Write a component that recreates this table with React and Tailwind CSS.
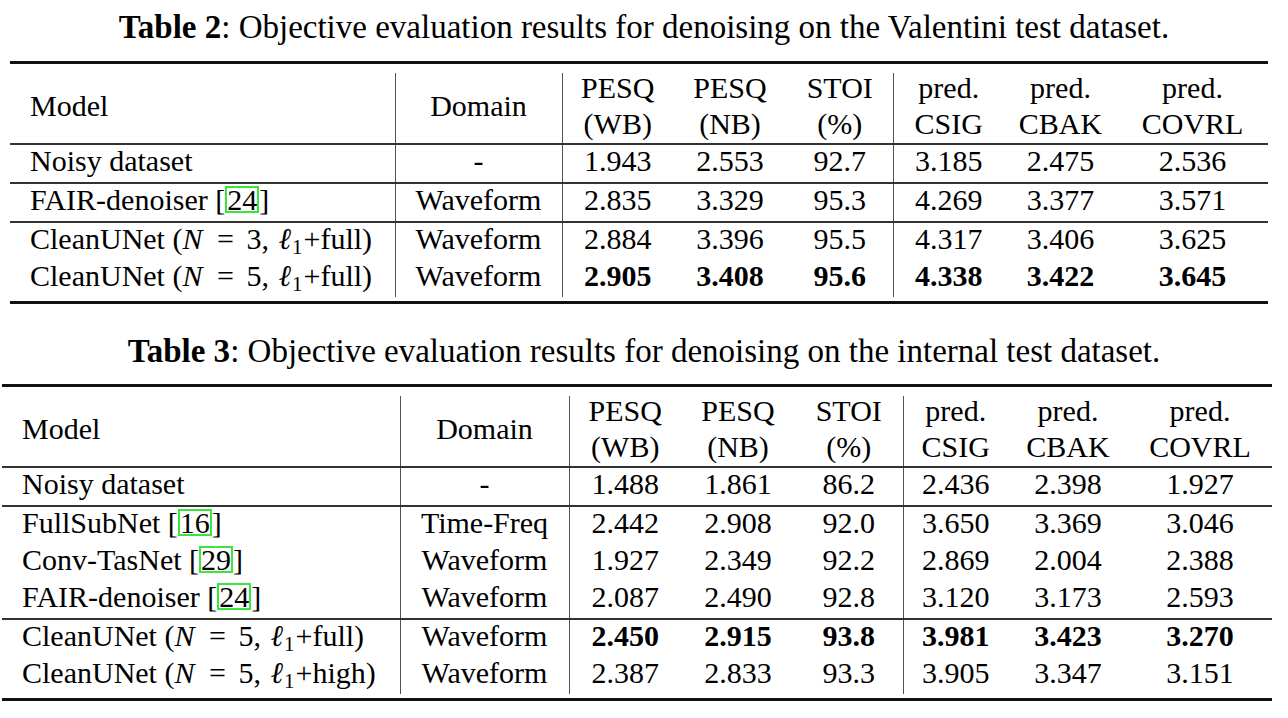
import React from "react";

const Cite = ({ n }) => (
  <>
    [<span className="inline-block border-2 border-[#3be63b] leading-[23px] px-0">{n}</span>]
  </>
);

const Clean = ({ n, loss }) => (
  <>
    CleanUNet (<i className="pr-[2px]">N</i>
    <span className="inline-block w-[42px] text-center">=</span>
    {n}, <i className="pl-[2px] pr-[1px]">ℓ</i>
    <sub className="text-[21px] pr-[1px]">1</sub>+{loss})
  </>
);

const VL = "border-l border-l-[#555]";

function H({ children }) {
  return <div className="-mt-[4px] leading-[36px]">{children}</div>;
}

function Header() {
  return (
    <tr className="border-b-2 border-b-[#333]">
      <td className="h-[71px] p-0 pl-[20px] text-left align-middle"><H>Model</H></td>
      <td className={`${VL} p-0 text-center align-middle`}><H>Domain</H></td>
      <td className={`${VL} p-0 text-center align-middle`}><H>PESQ<br />(WB)</H></td>
      <td className="p-0 text-center align-middle"><H>PESQ<br />(NB)</H></td>
      <td className="p-0 text-center align-middle"><H>STOI<br />(%)</H></td>
      <td className={`${VL} p-0 text-center align-middle`}><H>pred.<br />CSIG</H></td>
      <td className="p-0 text-center align-middle"><H>pred.<br />CBAK</H></td>
      <td className="p-0 text-center align-middle"><H>pred.<br />COVRL</H></td>
    </tr>
  );
}

function Row({ model, domain, vals, bold, line }) {
  return (
    <tr className={line ? "border-b-2 border-b-[#333]" : ""}>
      <td className="h-[37px] p-0 pb-[5px] pl-[20px] leading-[32px] text-left whitespace-nowrap">{model}</td>
      <td className={`${VL} p-0 pb-[5px] leading-[32px] text-center`}>{domain}</td>
      {vals.map((v, i) => (
        <td
          key={i}
          className={`${i === 0 || i === 3 ? VL : ""} p-0 pb-[5px] leading-[32px] text-center ${bold ? "font-bold" : ""}`}
        >
          {v}
        </td>
      ))}
    </tr>
  );
}

function Spacer({ h }) {
  return (
    <tr>
      <td colSpan={8} className={`${h} p-0 leading-none`}></td>
    </tr>
  );
}

export default function App() {
  return (
    <div className="w-[1288px] h-[718px] bg-white text-black overflow-hidden font-['Liberation_Serif',serif] text-[30px] leading-[36px]">
      <div className="pt-[9px] text-center text-[33px] leading-[36px]">
        <span className="font-bold">Table 2</span>: Objective evaluation results for denoising on the Valentini test dataset.
      </div>
      <div className="mt-[16px] ml-[10px] w-[1258px]">
        <div className="h-[3px] bg-[#111]"></div>
        <table className="table-fixed border-collapse w-[1258px]">
          <colgroup>
            <col className="w-[385px]" />
            <col className="w-[167px]" />
            <col className="w-[111px]" />
            <col className="w-[114px]" />
            <col className="w-[106px]" />
            <col className="w-[111px]" />
            <col className="w-[113px]" />
            <col className="w-[151px]" />
          </colgroup>
          <tbody>
            <Spacer h="h-[9px]" />
            <Header />
            <Row model="Noisy dataset" domain="-" vals={["1.943", "2.553", "92.7", "3.185", "2.475", "2.536"]} line />
            <Row model={<>FAIR-denoiser <Cite n="24" /></>} domain="Waveform" vals={["2.835", "3.329", "95.3", "4.269", "3.377", "3.571"]} line />
            <Row model={<Clean n="3" loss="full" />} domain="Waveform" vals={["2.884", "3.396", "95.5", "4.317", "3.406", "3.625"]} />
            <Row model={<Clean n="5" loss="full" />} domain="Waveform" vals={["2.905", "3.408", "95.6", "4.338", "3.422", "3.645"]} bold />
            <Spacer h="h-[4px]" />
          </tbody>
        </table>
        <div className="h-[3px] bg-[#111]"></div>
      </div>

      <div className="mt-[29px] text-center text-[33px] leading-[36px]">
        <span className="font-bold">Table 3</span>: Objective evaluation results for denoising on the internal test dataset.
      </div>
      <div className="mt-[15px] ml-[2px] w-[1270px]">
        <div className="h-[3px] bg-[#111]"></div>
        <table className="table-fixed border-collapse w-[1270px]">
          <colgroup>
            <col className="w-[398px]" />
            <col className="w-[169px]" />
            <col className="w-[112px]" />
            <col className="w-[114px]" />
            <col className="w-[108px]" />
            <col className="w-[105px]" />
            <col className="w-[120px]" />
            <col className="w-[144px]" />
          </colgroup>
          <tbody>
            <Spacer h="h-[9px]" />
            <Header />
            <Row model="Noisy dataset" domain="-" vals={["1.488", "1.861", "86.2", "2.436", "2.398", "1.927"]} line />
            <Row model={<>FullSubNet <Cite n="16" /></>} domain="Time-Freq" vals={["2.442", "2.908", "92.0", "3.650", "3.369", "3.046"]} />
            <Row model={<>Conv-TasNet <Cite n="29" /></>} domain="Waveform" vals={["1.927", "2.349", "92.2", "2.869", "2.004", "2.388"]} />
            <Row model={<>FAIR-denoiser <Cite n="24" /></>} domain="Waveform" vals={["2.087", "2.490", "92.8", "3.120", "3.173", "2.593"]} line />
            <Row model={<Clean n="5" loss="full" />} domain="Waveform" vals={["2.450", "2.915", "93.8", "3.981", "3.423", "3.270"]} bold />
            <Row model={<Clean n="5" loss="high" />} domain="Waveform" vals={["2.387", "2.833", "93.3", "3.905", "3.347", "3.151"]} />
            <Spacer h="h-[4px]" />
          </tbody>
        </table>
        <div className="h-[3px] bg-[#111]"></div>
      </div>
    </div>
  );
}
